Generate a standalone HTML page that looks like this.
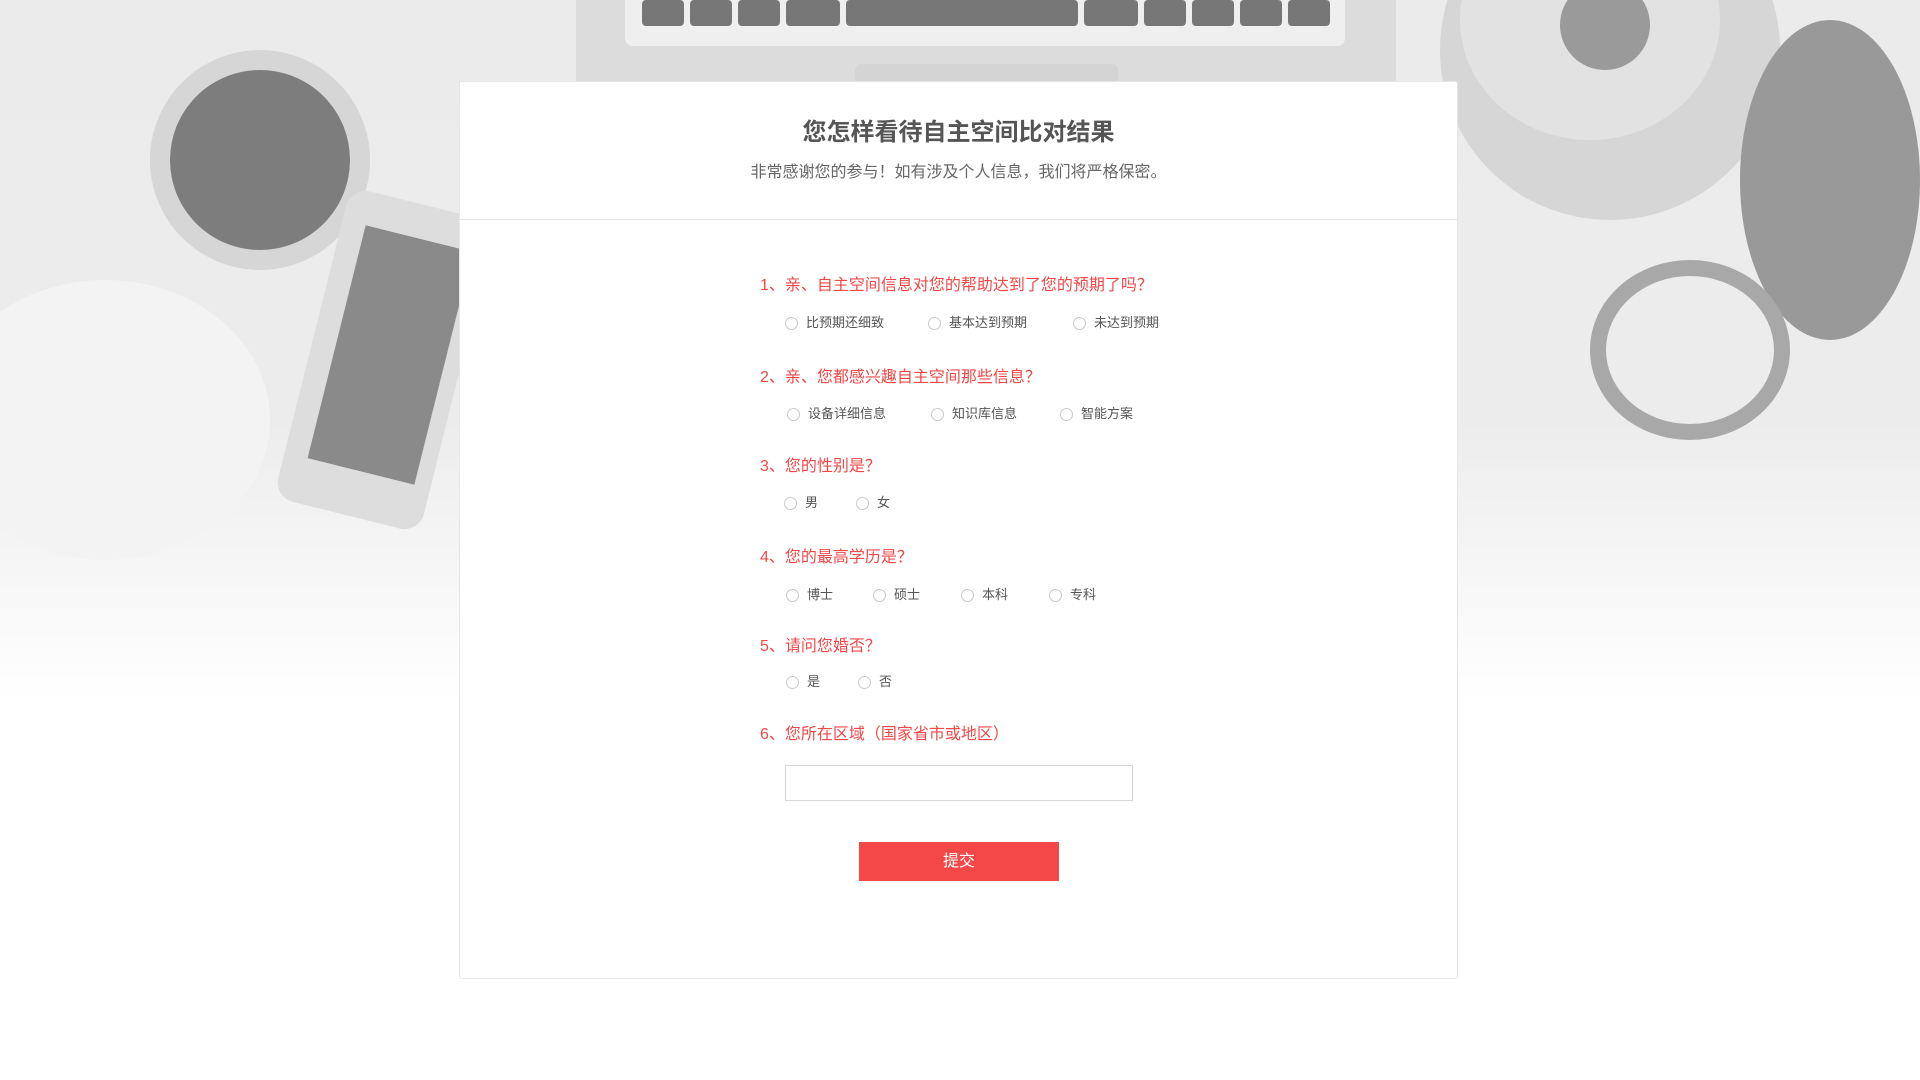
<!DOCTYPE html>
<html><head><meta charset="utf-8"><style>
*{margin:0;padding:0;box-sizing:border-box}
body{width:1920px;height:1080px;overflow:hidden;position:relative;background:#fff;font-family:"Liberation Sans","Noto Sans CJK SC",sans-serif}
.bg{position:absolute;left:0;top:0;width:1920px;height:700px;background:linear-gradient(#ebebeb,#ececec 60%,#fff)}
.sh{position:absolute;border-radius:50%}
.card{position:absolute;left:459px;top:81px;width:999px;height:898px;background:#fff;border:1px solid #e6e6e6;border-radius:3px}
.hd{height:138px;border-bottom:1px solid #e3e3e3;text-align:center}
.hd h1{font-size:24px;color:#555;font-weight:bold;padding-top:36px;line-height:30px}
.hd p{font-size:16px;color:#666;margin-top:10px}
.q{position:absolute;left:300px;font-size:16px;color:#f24848;line-height:20px}
.o{position:absolute;font-size:13px;color:#555;line-height:16px}
.o:before{content:"";position:absolute;left:-21px;top:2px;width:11px;height:11px;border:1px solid #c9c9c9;border-radius:50%}
.inp{position:absolute;left:325px;top:683px;width:348px;height:36px;border:1px solid #d6d6d6}
.btn{position:absolute;left:399px;top:760px;width:200px;height:39px;background:#f44848;color:#fff;font-size:16px;text-align:center;line-height:39px}
</style></head><body>
<div class="bg"></div>
<div style="position:absolute;left:576px;top:0;width:820px;height:81px;background:#dcdcdc"></div>
<div style="position:absolute;left:625px;top:0;width:720px;height:46px;background:#efefef;border-radius:0 0 8px 8px"></div>
<div style="position:absolute;left:642px;top:0;width:42px;height:26px;background:#777;border-radius:4px"></div>
<div style="position:absolute;left:690px;top:0;width:42px;height:26px;background:#777;border-radius:4px"></div>
<div style="position:absolute;left:738px;top:0;width:42px;height:26px;background:#777;border-radius:4px"></div>
<div style="position:absolute;left:786px;top:0;width:54px;height:26px;background:#777;border-radius:4px"></div>
<div style="position:absolute;left:846px;top:0;width:232px;height:26px;background:#777;border-radius:4px"></div>
<div style="position:absolute;left:1084px;top:0;width:54px;height:26px;background:#777;border-radius:4px"></div>
<div style="position:absolute;left:1144px;top:0;width:42px;height:26px;background:#777;border-radius:4px"></div>
<div style="position:absolute;left:1192px;top:0;width:42px;height:26px;background:#777;border-radius:4px"></div>
<div style="position:absolute;left:1240px;top:0;width:42px;height:26px;background:#777;border-radius:4px"></div>
<div style="position:absolute;left:1288px;top:0;width:42px;height:26px;background:#777;border-radius:4px"></div>
<div style="position:absolute;left:855px;top:64px;width:263px;height:30px;background:#d4d4d4;border-radius:6px"></div>
<div class="sh" style="left:150px;top:50px;width:220px;height:220px;background:#d6d6d6"></div>
<div class="sh" style="left:170px;top:70px;width:180px;height:180px;background:#7d7d7d"></div>
<div class="sh" style="left:-60px;top:280px;width:330px;height:280px;background:#f3f3f3"></div>
<div style="position:absolute;left:310px;top:200px;width:150px;height:320px;background:#ddd;border-radius:20px;transform:rotate(14deg)"></div>
<div style="position:absolute;left:335px;top:235px;width:110px;height:240px;background:#8a8a8a;transform:rotate(14deg)"></div>
<div class="sh" style="left:1440px;top:-120px;width:340px;height:340px;background:#d6d6d6"></div>
<div class="sh" style="left:1460px;top:-100px;width:260px;height:240px;background:#e2e2e2"></div>
<div class="sh" style="left:1560px;top:-20px;width:90px;height:90px;background:#9a9a9a"></div>
<div class="sh" style="left:1740px;top:20px;width:180px;height:320px;background:#999"></div>
<div class="sh" style="left:1590px;top:260px;width:200px;height:180px;border:16px solid #a8a8a8"></div>
<div class="card">
<div class="hd"><h1>您怎样看待自主空间比对结果</h1><p>非常感谢您的参与！如有涉及个人信息，我们将严格保密。</p></div>
<div class="q" style="top:194px">1、亲、自主空间信息对您的帮助达到了您的预期了吗？</div>
<div class="o" style="top:233px;left:346px">比预期还细致</div>
<div class="o" style="top:233px;left:489px">基本达到预期</div>
<div class="o" style="top:233px;left:634px">未达到预期</div>
<div class="q" style="top:286px">2、亲、您都感兴趣自主空间那些信息？</div>
<div class="o" style="top:324px;left:348px">设备详细信息</div>
<div class="o" style="top:324px;left:492px">知识库信息</div>
<div class="o" style="top:324px;left:621px">智能方案</div>
<div class="q" style="top:375px">3、您的性别是？</div>
<div class="o" style="top:413px;left:345px">男</div>
<div class="o" style="top:413px;left:417px">女</div>
<div class="q" style="top:466px">4、您的最高学历是？</div>
<div class="o" style="top:505px;left:347px">博士</div>
<div class="o" style="top:505px;left:434px">硕士</div>
<div class="o" style="top:505px;left:522px">本科</div>
<div class="o" style="top:505px;left:610px">专科</div>
<div class="q" style="top:555px">5、请问您婚否？</div>
<div class="o" style="top:592px;left:347px">是</div>
<div class="o" style="top:592px;left:419px">否</div>
<div class="q" style="top:643px">6、您所在区域（国家省市或地区）</div>
<div class="inp"></div>
<div class="btn">提交</div>
</div>
</body></html>
